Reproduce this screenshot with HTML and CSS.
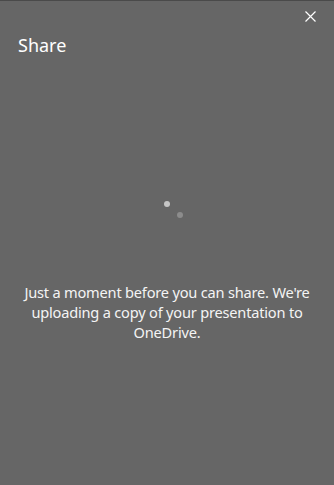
FILE: index.html
```html
<!DOCTYPE html>
<html lang="en">
<head>
<meta charset="utf-8">
<title>Share</title>
<link rel="stylesheet" href="styles.css">
</head>
<body>
<div class="panel">
  <div class="topbar">
    <button class="close" aria-label="Close">
      <svg width="11" height="11" viewBox="0 0 11 11"><path d="M0.5 0.5L10.5 10.5M10.5 0.5L0.5 10.5" stroke="#ffffff" stroke-width="1.2" fill="none"/></svg>
    </button>
  </div>
  <h1 class="title">Share</h1>
  <div class="spinner">
    <span class="dot dot-a"></span>
    <span class="dot dot-b"></span>
  </div>
  <p class="message">Just a moment before you can share. We're uploading a copy of your presentation to OneDrive.</p>
</div>
</body>
</html>
```
FILE: styles.css
```css
html, body {
  margin: 0;
  padding: 0;
  height: 100%;
}
body {
  background: #666666;
  font-family: "Noto Sans", "Open Sans", sans-serif;
  color: #ffffff;
}
.panel {
  display: flex;
  flex-direction: column;
  min-height: 100%;
  border-top: 1px solid #4a4a4a;
  box-sizing: border-box;
}
.topbar {
  height: 32px;
  display: flex;
  justify-content: flex-end;
  align-items: flex-start;
}
.close {
  width: 11px;
  height: 11px;
  padding: 0;
  margin: 10px 18px 0 0;
  border: 0;
  background: transparent;
  display: flex;
}
.title {
  margin: 0 0 0 18px;
  font-size: 18px;
  line-height: 24px;
  font-weight: 400;
}
.spinner {
  position: relative;
  width: 40px;
  height: 40px;
  align-self: center;
  margin-top: 133px;
}
.dot {
  position: absolute;
  width: 6px;
  height: 6px;
  border-radius: 50%;
}
.dot-a {
  left: 17px;
  top: 11px;
  background: #c6c6c6;
}
.dot-b {
  left: 30px;
  top: 22px;
  background: #8c8c8c;
}
.message {
  margin: 52px 6px 0;
  text-align: center;
  font-size: 14.6px;
  line-height: 20px;
  letter-spacing: -0.2px;
  color: #f4f4f4;
}
```
